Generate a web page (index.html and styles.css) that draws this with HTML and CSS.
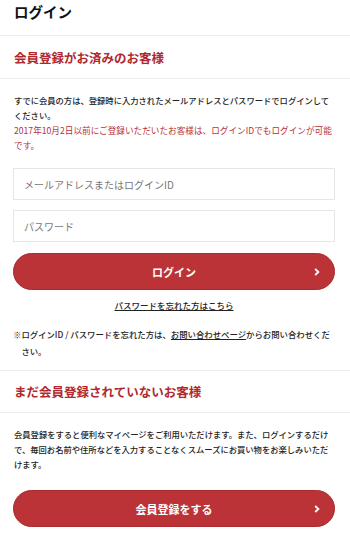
FILE: index.html
```html
<!DOCTYPE html>
<html lang="ja">
<head>
<meta charset="utf-8">
<link rel="stylesheet" href="styles.css">
</head>
<body>
<header class="page-head"><h1 class="page-title">ログイン</h1></header>

<section class="block">
  <h2 class="block-title">会員登録がお済みのお客様</h2>
  <div class="block-body">
    <p class="text">すでに会員の方は、登録時に入力されたメールアドレスとパスワードでログインしてください。</p>
    <p class="text red">2017年10月2日以前にご登録いただいたお客様は、ログインIDでもログインが可能です。</p>
    <form class="form">
      <input class="field" type="text" placeholder="メールアドレスまたはログインID">
      <input class="field" type="password" placeholder="パスワード">
      <button class="btn" type="button"><span>ログイン</span>
        <svg class="chev" viewBox="0 0 6 8" width="6" height="8"><path d="M1.2 1 L4.4 4 L1.2 7" fill="none" stroke="#fff" stroke-width="1.8"/></svg>
      </button>
    </form>
    <p class="forgot"><a href="#">パスワードを忘れた方はこちら</a></p>
    <div class="note"><span class="note-mark">※</span><p class="note-text">ログインID / パスワードを忘れた方は、<a href="#">お問い合わせページ</a>からお問い合わせください。</p></div>
  </div>
</section>

<section class="block block-second">
  <h2 class="block-title">まだ会員登録されていないお客様</h2>
  <div class="block-body">
    <p class="text">会員登録をすると便利なマイページをご利用いただけます。また、ログインするだけで、毎回お名前や住所などを入力することなくスムーズにお買い物をお楽しみいただけます。</p>
    <button class="btn btn-reg" type="button"><span>会員登録をする</span>
      <svg class="chev" viewBox="0 0 6 8" width="6" height="8"><path d="M1.2 1 L4.4 4 L1.2 7" fill="none" stroke="#fff" stroke-width="1.8"/></svg>
    </button>
  </div>
</section>
</body>
</html>
```

FILE: styles.css
```css
* { box-sizing: border-box; }
html, body { margin: 0; padding: 0; background: #fff; }
body {
  font-family: "Noto Sans CJK JP", "Noto Sans", sans-serif;
  color: #222;
  width: 350px;
  overflow: hidden;
}
.page-head {
  height: 36px;
  border-bottom: 1px solid #ececec;
  padding: 0 14px;
  display: flex;
  align-items: center;
}
.page-title {
  margin: 0;
  font-size: 14.5px;
  font-weight: 700;
  line-height: 1;
  margin-top: -10px;
  color: #111;
}
.block-title {
  margin: 0;
  height: 43px;
  display: flex;
  align-items: center;
  padding: 0 14px;
  font-size: 12.5px;
  font-weight: 700;
  color: #b1282e;
  border-bottom: 1px solid #ececec;
}
.block-body {
  padding: 14px 15px 0 13px;
}
.text {
  margin: 0;
  padding-left: 1px;
  font-size: 8.3px;
  line-height: 15px;
  font-weight: 500;
  color: #222;
}
.red { color: #b83238; font-weight: 400; font-size: 8.65px; }
.form {
  margin-top: 15px;
  display: flex;
  flex-direction: column;
  gap: 10px;
}
.field {
  display: block;
  width: 100%;
  height: 32px;
  border: 1px solid #e6e6e6;
  border-radius: 0;
  padding: 0 10px;
  font-family: inherit;
  font-size: 10px;
  color: #222;
  outline: none;
  background: #fff;
}
.field::placeholder { color: #777; }
.btn {
  position: relative;
  display: flex;
  align-items: center;
  justify-content: center;
  width: 100%;
  height: 37px;
  margin-top: 1px;
  border: 1px solid #a92a2f;
  border-radius: 19px;
  background: #bb3337;
  color: #fff;
  font-family: inherit;
  font-size: 11px;
  font-weight: 700;
  padding: 0;
}
.chev {
  position: absolute;
  right: 14px;
  top: 50%;
  margin-top: -4px;
}
.forgot {
  margin: 8px 0 0;
  text-align: center;
  font-size: 8.5px;
  line-height: 15px;
  font-weight: 500;
}
.forgot a, .note a { color: #222; text-decoration: underline; }
.note {
  margin: 13px 0 0;
  display: flex;
  font-size: 8.4px;
  line-height: 17px;
  font-weight: 500;
}
.note-mark { flex: none; }
.note-text { margin: 0; flex: 1; }
.block-second {
  margin-top: 10px;
  border-top: 1px solid #ececec;
}
.block-second .block-title { height: 42px; }
.btn-reg { margin-top: 18px; }
```
